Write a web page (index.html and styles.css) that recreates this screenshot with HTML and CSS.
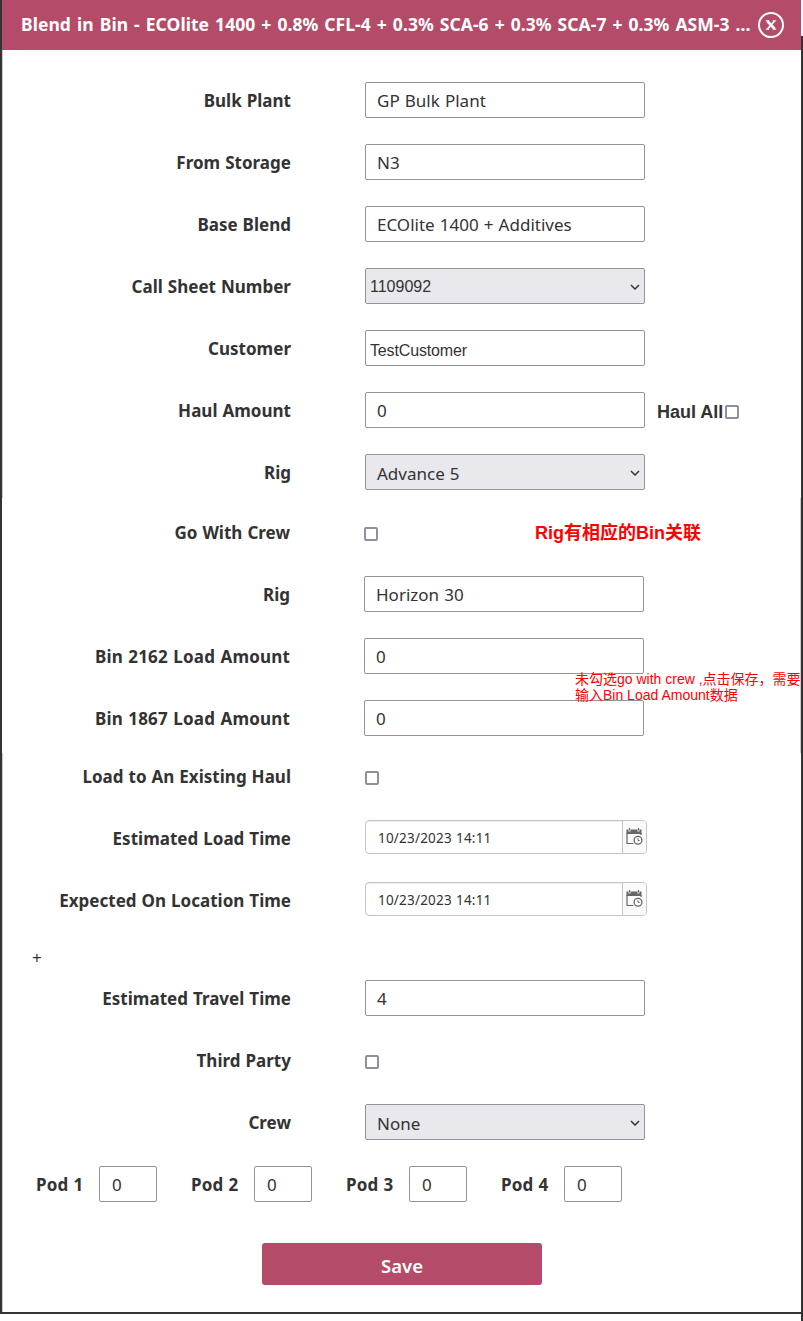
FILE: index.html
```html
<!DOCTYPE html>
<html lang="en">
<head>
<meta charset="utf-8">
<title>Blend in Bin</title>
<link rel="stylesheet" href="styles.css">
</head>
<body>
<div class="dialog">
  <header class="titlebar">
    <h1 class="title">Blend in Bin - ECOlite 1400 + 0.8% CFL-4 + 0.3% SCA-6 + 0.3% SCA-7 + 0.3% ASM-3 ...</h1>
    <svg class="close" viewBox="0 0 28 28"><circle cx="14" cy="14" r="12" fill="none" stroke="#fff" stroke-width="2"/><path d="M10.300 10l7.400 8" fill="none" stroke="#fff" stroke-width="2.600"/><path d="M17.500 10l-7 8" fill="none" stroke="#fff" stroke-width="1.800"/><path d="M8.800 9.800h3.400M15.800 9.800h3.400M8.800 18.200h3.400M15.800 18.200h3.400" stroke="#fff" stroke-width="1"/></svg>
  </header>
  <form class="form">
    <div class="row"><label class="label">Bulk Plant</label><div class="field">GP Bulk Plant</div></div>
    <div class="row"><label class="label">From Storage</label><div class="field">N3</div></div>
    <div class="row"><label class="label">Base Blend</label><div class="field">ECOlite 1400 + Additives</div></div>
    <div class="row"><label class="label">Call Sheet Number</label><div class="field select plain">1109092<svg class="chevron" viewBox="0 0 10 6"><path d="M1 1l4 4 4-4"/></svg></div></div>
    <div class="row"><label class="label">Customer</label><div class="field plain customer">TestCustomer</div></div>
    <div class="row"><label class="label">Haul Amount</label><div class="field">0</div><span class="haul">Haul All</span><span class="check"></span></div>
    <div class="row"><label class="label">Rig</label><div class="field select">Advance 5<svg class="chevron" viewBox="0 0 10 6"><path d="M1 1l4 4 4-4"/></svg></div></div>
    <section class="crew">
      <div class="row"><label class="label">Go With Crew</label><span class="check"></span><strong class="note">Rig有相应的Bin关联</strong></div>
      <div class="row"><label class="label">Rig</label><div class="field">Horizon 30</div></div>
      <div class="row"><label class="label bin">Bin 2162 Load Amount</label><div class="field">0</div></div>
      <div class="row"><label class="label bin">Bin 1867 Load Amount</label><div class="field">0</div></div>
      <p class="hint"><span>未勾选go with crew ,点击保存，需要</span><br><span>输入Bin Load Amount数据</span></p>
    </section>
    <div class="row"><label class="label">Load to An Existing Haul</label><span class="check"></span></div>
    <div class="row"><label class="label">Estimated Load Time</label><div class="date"><span class="value">10/23/2023 14:11</span><span class="picker"><svg class="cal" viewBox="0 0 17 17"><path d="M.5 1.500h2v2h2v-2h7v2h2v-2h2V6H.5z" fill="#666"/><path d="M3.500 0v2.500M12.500 0v2.500M1 5v10.500h6.500M15 5v2" fill="none" stroke="#666" stroke-width="1.200"/><circle cx="12" cy="12.200" r="3.900" fill="#fff" stroke="#666" stroke-width="1.300"/><path d="M12 10.200v2.300h1.600" fill="none" stroke="#666"/></svg></span></div></div>
    <div class="row"><label class="label">Expected On Location Time</label><div class="date"><span class="value">10/23/2023 14:11</span><span class="picker"><svg class="cal" viewBox="0 0 17 17"><path d="M.5 1.500h2v2h2v-2h7v2h2v-2h2V6H.5z" fill="#666"/><path d="M3.500 0v2.500M12.500 0v2.500M1 5v10.500h6.500M15 5v2" fill="none" stroke="#666" stroke-width="1.200"/><circle cx="12" cy="12.200" r="3.900" fill="#fff" stroke="#666" stroke-width="1.300"/><path d="M12 10.200v2.300h1.600" fill="none" stroke="#666"/></svg></span></div></div>
    <div class="plus">+</div>
    <div class="row"><label class="label">Estimated Travel Time</label><div class="field">4</div></div>
    <div class="row"><label class="label">Third Party</label><span class="check"></span></div>
    <div class="row"><label class="label">Crew</label><div class="field select">None<svg class="chevron" viewBox="0 0 10 6"><path d="M1 1l4 4 4-4"/></svg></div></div>
    <div class="pods">
      <div class="pod"><label class="podname">Pod 1</label><div class="field small">0</div></div>
      <div class="pod"><label class="podname">Pod 2</label><div class="field small">0</div></div>
      <div class="pod"><label class="podname">Pod 3</label><div class="field small">0</div></div>
      <div class="pod"><label class="podname">Pod 4</label><div class="field small">0</div></div>
    </div>
    <button class="save" type="button">Save</button>
  </form>
</div>
<div class="edge"></div>
</body>
</html>
```
FILE: styles.css
```css
* { box-sizing: border-box; }
body {
  margin: 0;
  height: 1321px;
  display: flex;
  background: #fff;
  color: #333;
  font-family: "Noto Sans", "Open Sans", sans-serif;
  font-size: 17px;
  overflow: hidden;
}
.dialog {
  width: 801px;
  height: 1314px;
  border-left: 2px solid #333;
  border-bottom: 2px solid #333;
}
.edge { width: 2px; height: 1285px; margin-top: 36px; background: #333; }
.titlebar {
  height: 50px;
  padding: 0 16px 2px 19px;
  display: flex;
  align-items: center;
  justify-content: space-between;
  background: #b44c69;
  color: #fff;
}
.title {
  margin: 0;
  font-size: 17.500px;
  line-height: 24px;
  font-weight: 700;
  white-space: nowrap;
  letter-spacing: 0.050px;
  word-spacing: 1.400px;
}
.close { width: 28px; height: 28px; margin-top: 2px; flex: none; }
.form { height: 1262px; padding-top: 32px; display: flex; flex-direction: column; border-left: 1px solid #ccc; }
.row { height: 36px; margin-bottom: 26px; flex: none; display: flex; align-items: center; }
.label {
  width: 288px;
  margin-right: 74px;
  padding-top: 2px;
  flex: none;
  text-align: right;
  font-weight: 700;
  line-height: 24px;
  letter-spacing: 0.020px;
  word-spacing: 0.500px;
  white-space: nowrap;
}
.bin { letter-spacing: 0.180px; word-spacing: 0.800px; }
.field {
  width: 280px;
  height: 36px;
  flex: none;
  padding: 1px 4px 0 11px;
  display: flex;
  align-items: center;
  border: 1px solid #949494;
  border-radius: 2px;
  background: #fff;
  word-spacing: 0.700px;
}
.select { padding-top: 2px; justify-content: space-between; background: #e9e8ed; }
.plain { padding-left: 4px; font-family: "Liberation Sans", sans-serif; font-size: 16px; }
.customer { padding-top: 5px; letter-spacing: -0.150px; }
.chevron { width: 10px; height: 6px; margin-bottom: 1px; fill: none; stroke: #333; stroke-width: 1.500; }
.haul { margin: 4px 2px 0 12px; font: 700 18px/24px "Liberation Sans", sans-serif; }
.check { width: 14px; height: 14px; margin-top: 4px; border: 2px solid #8f8f9d; border-radius: 2px; flex: none; }
.crew {
  position: relative;
  height: 255px;
  flex: none;
  margin: -18px 0 5px -1px;
  padding-top: 16px;
  border-right: 1px solid #ccc;
  background: #fff;
}
.note { margin: 2px 0 0 157px; font: 700 18px/24px "Liberation Sans", "Noto Sans CJK SC", sans-serif; color: #f00; white-space: nowrap; }
.hint {
  position: absolute;
  left: 573px;
  top: 173px;
  margin: 0;
  color: #f00;
  font: 14px/16px "Liberation Sans", "Noto Sans CJK SC", sans-serif;
  white-space: nowrap;
}
.date {
  width: 282px;
  height: 34px;
  margin-bottom: 2px;
  display: flex;
  border: 1px solid #c5c5c5;
  border-radius: 4px;
  overflow: hidden;
  box-shadow: inset 0 1px 1px #eee;
}
.value { flex: 1; padding: 1px 0 0 12px; line-height: 32px; font-size: 13.500px; letter-spacing: 0.200px; word-spacing: 0.500px; }
.picker { width: 24px; border-left: 1px solid #c5c5c5; background: #fafafa; }
.cal { display: block; width: 17px; height: 17px; margin: 7px 0 0 3px; }
.plus { height: 36px; flex: none; padding: 2px 0 0 29px; font-size: 17px; line-height: 24px; }
.pods { height: 36px; flex: none; margin-left: 33px; display: flex; }
.pod { width: 155px; display: flex; align-items: center; }
.podname { width: 63px; font-weight: 700; white-space: nowrap; letter-spacing: 0.100px; word-spacing: 0.800px; }
.small { width: 58px; padding-left: 12px; }
.save {
  width: 280px;
  height: 42px;
  flex: none;
  margin: 41px 0 0 259px;
  padding: 3px 0 0;
  border: 0;
  border-radius: 3px;
  background: #b44c69;
  color: #fff;
  font: 600 18.500px/24px "Noto Sans", "Open Sans", sans-serif;
}
```
